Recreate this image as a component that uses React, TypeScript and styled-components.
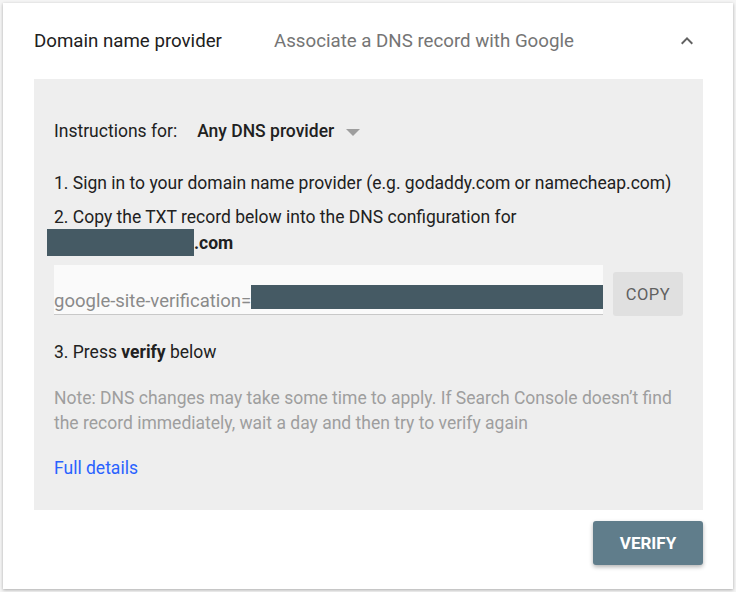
import styled, { createGlobalStyle } from 'styled-components';

const GlobalStyle = createGlobalStyle`
    html, body {
        margin: 0;
        padding: 0;
        background: #f4f4f4;
        font-family: Roboto, 'Liberation Sans', sans-serif;
    }
`;

const Page = styled.div`
    padding: 3px;
`;

const Card = styled.div`
    background: #ffffff;
    box-shadow: 0 1px 3px rgba(0, 0, 0, 0.3);
    padding: 0 30px 25px 31px;
    height: 586px;
    box-sizing: border-box;
`;

const Header = styled.div`
    display: flex;
    align-items: center;
    height: 76px;
    font-size: 18.7px;
`;

const Title = styled.div`
    color: #212121;
    width: 240px;
`;

const Subtitle = styled.div`
    color: #757575;
    flex: 1;
`;

const Chevron = styled.svg`
    width: 24px;
    height: 24px;
    margin-right: 4px;
`;

const Panel = styled.div`
    background: #eeeeee;
    padding: 41px 20px 31px 20px;
    font-size: 17.5px;
    line-height: 22px;
    color: #212121;
`;

const InstructionsRow = styled.div`
    display: flex;
    align-items: center;
    margin-bottom: 30px;
`;

const Label = styled.span`
    margin-right: 20px;
`;

const Provider = styled.span`
    font-weight: 500;
`;

const Caret = styled.span`
    width: 0;
    height: 0;
    border-left: 7px solid transparent;
    border-right: 7px solid transparent;
    border-top: 7px solid #9e9e9e;
    margin-left: 12px;
    margin-top: 2px;
`;

const Step = styled.div`
    margin-bottom: 12px;
`;

const Domain = styled.div`
    display: flex;
    align-items: center;
    margin-left: -7px;
    font-weight: 700;
    height: 27px;
    margin-top: -11px;
`;

const Redacted = styled.span<{ $w: number; $h: number }>`
    display: inline-block;
    flex-shrink: 0;
    background: #455a64;
    width: ${(p) => p.$w}px;
    height: ${(p) => p.$h}px;
`;

const RecordRow = styled.div`
    display: flex;
    align-items: flex-end;
    margin: 9px 0 26px 0;
`;

const RecordField = styled.div`
    width: 549px;
    height: 50px;
    background: #fafafa;
    border-bottom: 1px solid #c8c8c8;
    display: flex;
    align-items: flex-end;
    padding-bottom: 5px;
    box-sizing: border-box;
    color: #8a8a8a;
    font-size: 18.5px;
    line-height: 20px;
    overflow: hidden;
    white-space: nowrap;
`;

const FieldText = styled.span`
    margin-bottom: -2px;
`;

const CopyButton = styled.button`
    margin-left: 10px;
    margin-bottom: -1px;
    width: 70px;
    height: 44px;
    border: none;
    border-radius: 3px;
    background: #e0e0e0;
    color: #616161;
    font-family: Roboto, sans-serif;
    font-size: 16.5px;
    letter-spacing: 0.5px;
`;

const Note = styled.div`
    color: #9e9e9e;
    line-height: 25px;
    margin: 23px 0 21px;
`;

const Link = styled.a`
    color: #2962ff;
    text-decoration: none;
`;

const Footer = styled.div`
    display: flex;
    justify-content: flex-end;
    padding-top: 11px;
`;

const VerifyButton = styled.button`
    width: 110px;
    height: 44px;
    border: none;
    border-radius: 3px;
    background: #607d8b;
    color: #ffffff;
    font-family: Roboto, sans-serif;
    font-weight: 700;
    font-size: 17px;
    box-shadow: 0 2px 4px rgba(0, 0, 0, 0.3);
`;

const App = () => (
    <>
        <GlobalStyle />
        <Page>
            <Card>
                <Header>
                    <Title>Domain name provider</Title>
                    <Subtitle>Associate a DNS record with Google</Subtitle>
                    <Chevron viewBox="0 0 24 24">
                        <path d="M7.41 15.41 12 10.83l4.59 4.58L18 14l-6-6-6 6z" fill="#616161" />
                    </Chevron>
                </Header>
                <Panel>
                    <InstructionsRow>
                        <Label>Instructions for:</Label>
                        <Provider>Any DNS provider</Provider>
                        <Caret />
                    </InstructionsRow>
                    <Step>1. Sign in to your domain name provider (e.g. godaddy.com or namecheap.com)</Step>
                    <Step>2. Copy the TXT record below into the DNS configuration for</Step>
                    <Domain>
                        <Redacted $w={147} $h={27} />
                        .com
                    </Domain>
                    <RecordRow>
                        <RecordField>
                            <FieldText>google-site-verification=</FieldText>
                            <Redacted $w={352} $h={24} />
                        </RecordField>
                        <CopyButton>COPY</CopyButton>
                    </RecordRow>
                    <Step>
                        3. Press <b>verify</b> below
                    </Step>
                    <Note>
                        Note: DNS changes may take some time to apply. If Search Console doesn’t find the record
                        immediately, wait a day and then try to verify again
                    </Note>
                    <Link href="#">Full details</Link>
                </Panel>
                <Footer>
                    <VerifyButton>VERIFY</VerifyButton>
                </Footer>
            </Card>
        </Page>
    </>
);

export default App;
